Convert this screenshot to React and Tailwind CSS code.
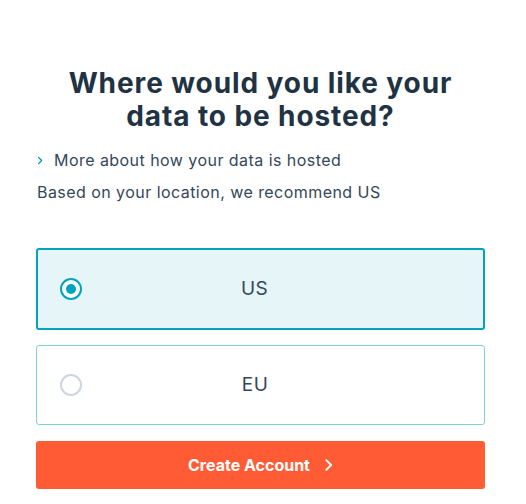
import { useState } from 'react'

const OPTIONS = [
  { id: 'us', label: 'US' },
  { id: 'eu', label: 'EU' },
]

function Chevron({ className }) {
  return (
    <svg viewBox="0 0 10 16" className={className} fill="none" stroke="currentColor" strokeWidth="2.2" strokeLinecap="round" strokeLinejoin="round">
      <path d="M2.5 2.5 8 8l-5.5 5.5" />
    </svg>
  )
}

export default function App() {
  const [region, setRegion] = useState('us')

  return (
    <div className="min-h-[504px] bg-white font-['Inter',sans-serif] text-[#33475b]">
      <div className="ml-[36px] w-[449px] pt-[67px]">
        <h1 className="text-center text-[28px] leading-[33px] font-bold tracking-[0.9px] text-[#213343]">
          Where would you like your
          <br />
          data to be hosted?
        </h1>

        <button className="mt-[16px] flex items-center gap-[11px] pl-[1px] text-[16px] leading-[22px] tracking-[0.45px] text-[#33475b]">
          <Chevron className="h-[9px] w-[6px] text-[#0091ae]" />
          More about how your data is hosted
        </button>
        <p className="mt-[10px] pl-[1px] text-[16px] leading-[22px] tracking-[0.45px]">Based on your location, we recommend US</p>

        <div className="mt-[45px] flex flex-col gap-[15px]">
          {OPTIONS.map(o => {
            const active = region === o.id
            return (
              <label
                key={o.id}
                onClick={() => setRegion(o.id)}
                className={`flex cursor-pointer items-center rounded-[3px] ${
                  active ? 'h-[82px] border-2 border-[#00a4bd] bg-[#e5f5f8] pl-[22px]' : 'h-[80px] border border-[#7fd1de] bg-white pl-[23px]'
                }`}
              >
                <span
                  className={`flex h-[22px] w-[22px] items-center justify-center rounded-full bg-white ${
                    active ? 'border-2 border-[#00a4bd]' : 'border-2 border-[#cbd6e2]'
                  }`}
                >
                  {active && <span className="h-[10px] w-[10px] rounded-full bg-[#00a4bd]" />}
                </span>
                <span className="flex-1 pr-[56px] text-center text-[19px] tracking-[0.4px] text-[#33475b]">{o.label}</span>
              </label>
            )
          })}
        </div>

        <button className="mt-[16px] flex h-[48px] w-full items-center justify-center gap-[14px] rounded-[3px] bg-[#ff5c35] text-[16px] font-bold text-white">
          Create Account
          <Chevron className="h-[14px] w-[9px]" />
        </button>
      </div>
    </div>
  )
}
